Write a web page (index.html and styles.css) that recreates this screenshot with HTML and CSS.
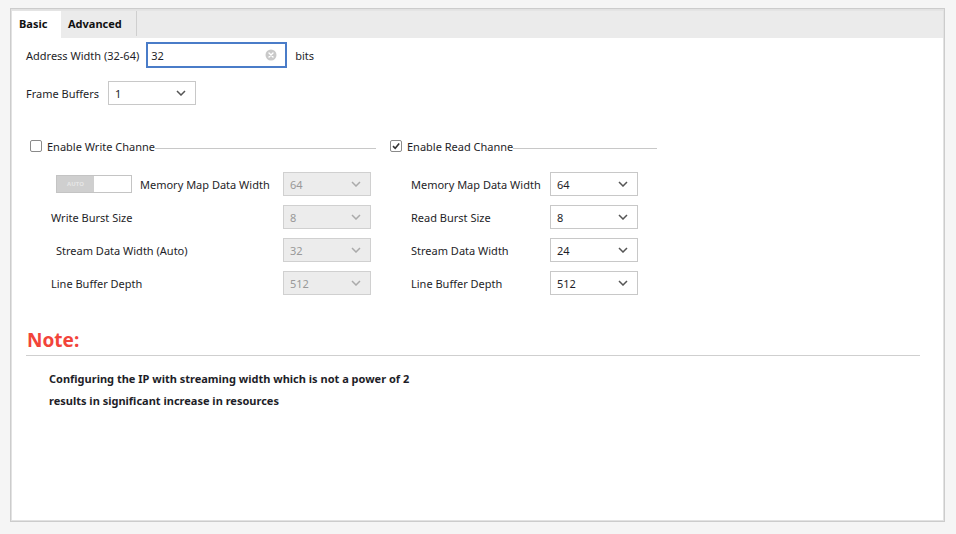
FILE: index.html
```html
<!DOCTYPE html>
<html>
<head>
<meta charset="utf-8">
<link rel="stylesheet" href="styles.css">
</head>
<body>
<div class="frame">
  <div class="tabs">
    <div class="tab active">Basic</div>
    <div class="tab">Advanced</div>
  </div>
  <div class="panel">
    <div class="row addr">
      <span class="lbl">Address Width (32-64)</span>
      <div class="input">
        <span>32</span>
        <svg class="clear" width="12" height="12" viewBox="0 0 12 12"><circle cx="6" cy="6" r="5.5" fill="#c9c9c9"/><path d="M4 4L8 8M8 4L4 8" stroke="#fff" stroke-width="1.4" stroke-linecap="round"/></svg>
      </div>
      <span class="unit">bits</span>
    </div>
    <div class="row fb">
      <span class="lbl">Frame Buffers</span>
      <div class="select"><span>1</span><svg class="chev" width="10" height="6" viewBox="0 0 10 6"><path d="M1 1L5 5L9 1" fill="none" stroke="#555" stroke-width="1.5"/></svg></div>
    </div>

    <div class="channels">
      <div class="group write">
        <div class="ghead">
          <span class="cb"></span>
          <span class="gtitle">Enable Write Channe</span>
          <span class="gline"></span>
        </div>
        <div class="grows">
          <div class="grow">
            <div class="lab ind2"><span class="toggle"><span class="toff">AUTO</span><span class="ton"></span></span><span>Memory Map Data Width</span></div>
            <div class="select dis"><span>64</span><svg class="chev" width="10" height="6" viewBox="0 0 10 6"><path d="M1 1L5 5L9 1" fill="none" stroke="#aaa" stroke-width="1.5"/></svg></div>
          </div>
          <div class="grow">
            <div class="lab ind1">Write Burst Size</div>
            <div class="select dis"><span>8</span><svg class="chev" width="10" height="6" viewBox="0 0 10 6"><path d="M1 1L5 5L9 1" fill="none" stroke="#aaa" stroke-width="1.5"/></svg></div>
          </div>
          <div class="grow">
            <div class="lab ind2">Stream Data Width (Auto)</div>
            <div class="select dis"><span>32</span><svg class="chev" width="10" height="6" viewBox="0 0 10 6"><path d="M1 1L5 5L9 1" fill="none" stroke="#aaa" stroke-width="1.5"/></svg></div>
          </div>
          <div class="grow">
            <div class="lab ind1">Line Buffer Depth</div>
            <div class="select dis"><span>512</span><svg class="chev" width="10" height="6" viewBox="0 0 10 6"><path d="M1 1L5 5L9 1" fill="none" stroke="#aaa" stroke-width="1.5"/></svg></div>
          </div>
        </div>
      </div>
      <div class="group read">
        <div class="ghead">
          <span class="cb checked"><svg width="10" height="10" viewBox="0 0 10 10"><path d="M2 5.2L4.2 7.3L8.2 2.6" fill="none" stroke="#333" stroke-width="1.6"/></svg></span>
          <span class="gtitle">Enable Read Channe</span>
          <span class="gline"></span>
        </div>
        <div class="grows">
          <div class="grow">
            <div class="lab">Memory Map Data Width</div>
            <div class="select"><span>64</span><svg class="chev" width="10" height="6" viewBox="0 0 10 6"><path d="M1 1L5 5L9 1" fill="none" stroke="#555" stroke-width="1.5"/></svg></div>
          </div>
          <div class="grow">
            <div class="lab">Read Burst Size</div>
            <div class="select"><span>8</span><svg class="chev" width="10" height="6" viewBox="0 0 10 6"><path d="M1 1L5 5L9 1" fill="none" stroke="#555" stroke-width="1.5"/></svg></div>
          </div>
          <div class="grow">
            <div class="lab">Stream Data Width</div>
            <div class="select"><span>24</span><svg class="chev" width="10" height="6" viewBox="0 0 10 6"><path d="M1 1L5 5L9 1" fill="none" stroke="#555" stroke-width="1.5"/></svg></div>
          </div>
          <div class="grow">
            <div class="lab">Line Buffer Depth</div>
            <div class="select"><span>512</span><svg class="chev" width="10" height="6" viewBox="0 0 10 6"><path d="M1 1L5 5L9 1" fill="none" stroke="#555" stroke-width="1.5"/></svg></div>
          </div>
        </div>
      </div>
    </div>

    <div class="note">
      <div class="ntitle">Note:</div>
      <div class="ntext">
        <p>Configuring the IP with streaming width which is not a power of 2</p>
        <p>results in significant increase in resources</p>
      </div>
    </div>
  </div>
</div>
</body>
</html>
```
FILE: styles.css
```css
html, body { margin: 0; padding: 0; }
body {
  background: #f5f5f5;
  font-family: "Noto Sans", sans-serif;
  font-size: 11px;
  color: #1e1e28;
  width: 956px;
  height: 534px;
  overflow: hidden;
}
.frame {
  margin: 8px 0 0 10px;
  width: 935px;
  height: 514px;
  box-sizing: border-box;
  border: 1px solid #cccccc;
  box-shadow: inset 0 0 0 1px #e2e2e2;
  background: #fff;
  padding: 1px;
  display: flex;
  flex-direction: column;
}
.tabs {
  display: flex;
  height: 28px;
  background: #ebebeb;
  border-top: 1px solid #e4e4e4;
  box-sizing: border-box;
}
.tab {
  font-weight: bold;
  padding: 0 7px;
  line-height: 25px;
  color: #111;
}
.tab.active {
  background: #fff;
  width: 49px;
  box-sizing: border-box;
}
.tab:nth-child(2) {
  border-right: 1px solid #cfcfcf;
  width: 76px;
  box-sizing: border-box;
  margin-bottom: 2px;
}
.panel {
  flex: 1;
  background: #fff;
  padding: 4px 0 0 14px;
}
.row { display: flex; align-items: center; }
.lbl { margin-right: 7px; }
.fb .lbl { margin-right: 9px; }
.input {
  width: 141px;
  height: 26px;
  box-sizing: border-box;
  border: 2px solid #4a7cc8;
  display: flex;
  align-items: center;
  justify-content: space-between;
  padding: 0 8px 0 3px;
}
.unit { margin-left: 8px; }
.fb { margin-top: 13px; }
.select {
  width: 88px;
  height: 24px;
  box-sizing: border-box;
  border: 1px solid #c8c8c8;
  background: #fff;
  display: flex;
  align-items: center;
  justify-content: space-between;
  padding: 0 9px 0 6px;
}
.select.dis { background: #ececec; color: #999; border-color: #d0d0d0; }
.channels {
  display: flex;
  margin-top: 34px;
  padding-left: 4px;
}
.group.write { width: 346px; }
.group.read { width: 267px; margin-left: 14px; }
.ghead { display: flex; align-items: center; height: 14px; }
.cb {
  width: 12px;
  height: 12px;
  box-sizing: border-box;
  border: 1px solid #8a8a8a;
  border-radius: 2px;
  margin-right: 5px;
  display: flex;
  align-items: center;
  justify-content: center;
}
.gline { flex: 1; height: 1px; background: #c8c8c8; margin-top: 4px; }
.grows { margin-top: 19px; display: flex; flex-direction: column; gap: 9px; }
.grow { display: flex; align-items: center; height: 24px; }
.write .lab { width: 253px; }
.read .lab { width: 160px; padding-left: 21px; box-sizing: border-box; }
.write .lab.ind1 { padding-left: 21px; box-sizing: border-box; }
.write .lab.ind2 { padding-left: 26px; box-sizing: border-box; }
.lab { display: flex; align-items: center; }
.toggle {
  display: flex;
  width: 76px;
  height: 18px;
  box-sizing: border-box;
  border: 1px solid #c4c4c4;
  margin-right: 8px;
}
.toff {
  width: 37px;
  background: #cfcfcf;
  color: #e6e6e6;
  font-size: 6px;
  font-weight: bold;
  display: flex;
  align-items: center;
  justify-content: center;
}
.ton { flex: 1; background: #fff; }
.note { margin-top: 33px; padding-right: 23px; }
.ntitle {
  color: #f2443a;
  font-weight: bold;
  font-size: 19px;
  line-height: 24px;
  padding-left: 1px;
  padding-bottom: 3px;
  border-bottom: 1px solid #cfcfcf;
}
.ntext { padding: 12px 0 0 23px; font-weight: bold; }
.ntext p { margin: 0; line-height: 22px; }
```
